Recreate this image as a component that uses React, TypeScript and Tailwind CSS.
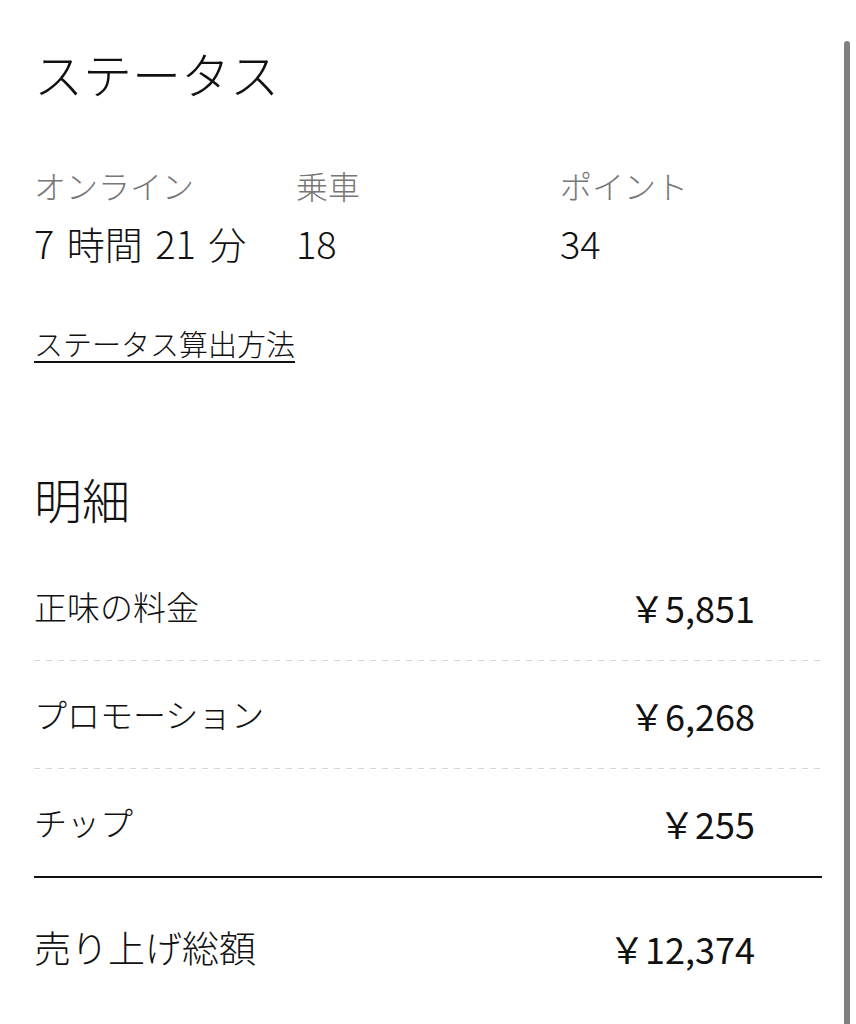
import React from 'react';

const stats = [
  { label: 'オンライン', value: '7 時間 21 分', width: 'w-[262px]' },
  { label: '乗車', value: '18', width: 'w-[264px]' },
  { label: 'ポイント', value: '34', width: 'w-[230px]' },
];

const items = [
  { label: '正味の料金', amount: '￥5,851' },
  { label: 'プロモーション', amount: '￥6,268' },
  { label: 'チップ', amount: '￥255' },
];

const DashedRule = () => (
  <div className="h-px w-full bg-[repeating-linear-gradient(to_right,#d6d6d6_0_6px,transparent_6px_12px)]" />
);

const App: React.FC = () => {
  return (
    <div className="relative w-[856px] h-[1024px] overflow-hidden bg-white text-[#111111] font-light font-['Noto_Sans_CJK_JP','Noto_Sans',sans-serif]">
      <div className="pl-[34px] pr-[34px]">
        {/* ステータス */}
        <h1 className="pt-[45px] text-[49px] leading-[56px] font-light">ステータス</h1>

        <div className="mt-[64px] flex">
          {stats.map((s) => (
            <div key={s.label} className={`${s.width} shrink-0`}>
              <div className="text-[32px] leading-[40px] text-[#777777]">{s.label}</div>
              <div className="mt-[16px] text-[38px] leading-[44px] [word-spacing:4px]">{s.value}</div>
            </div>
          ))}
        </div>

        <a className="mt-[60px] inline-block text-[29px] leading-[36px] underline decoration-2 underline-offset-[5px]">
          ステータス算出方法
        </a>

        {/* 明細 */}
        <h2 className="mt-[109px] text-[48px] leading-[56px] font-light">明細</h2>

        <div className="mt-[27px]">
          {items.map((it, i) => (
            <div key={it.label}>
              <div className="flex h-[107px] items-center justify-between">
                <span className="text-[33px]">{it.label}</span>
                <span className="pr-[67px] text-[36px] font-normal">{it.amount}</span>
              </div>
              {i < items.length - 1 ? <DashedRule /> : <div className="h-[2px] w-full bg-[#111111]" />}
            </div>
          ))}
          <div className="flex h-[140px] items-center justify-between">
            <span className="text-[37px]">売り上げ総額</span>
            <span className="pr-[67px] text-[36px] font-normal">￥12,374</span>
          </div>
        </div>
      </div>

      {/* scrollbar */}
      <div className="absolute right-[6px] top-[41px] bottom-0 w-[6px] rounded-t-full bg-[#808080]" />
    </div>
  );
};

export default App;
